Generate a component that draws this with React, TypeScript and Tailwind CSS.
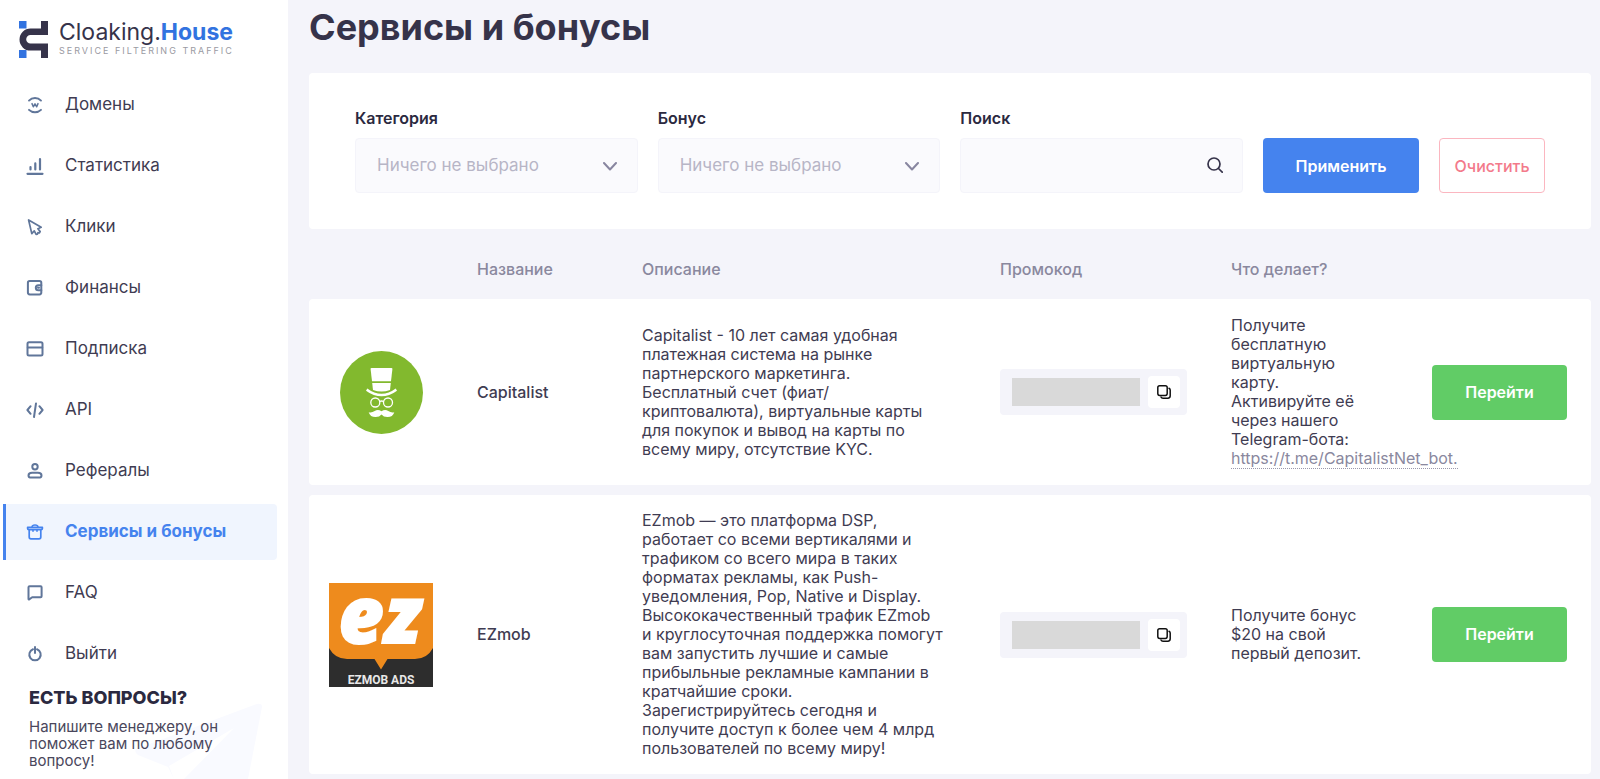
import type { ReactNode } from "react";

const FONT = "font-['Inter','Noto_Sans',sans-serif]";

function Icon({ children }: { children: ReactNode }) {
  return (
    <svg
      aria-hidden="true"
      viewBox="0 0 18 18"
      className="size-[18px] shrink-0"
      fill="none"
      stroke="currentColor"
      strokeWidth="2"
      strokeLinecap="round"
      strokeLinejoin="round"
    >
      {children}
    </svg>
  );
}

const nav: { label: string; icon: ReactNode; active?: boolean }[] = [
  {
    label: "Домены",
    icon: (
      <>
        <path d="M3 4.600Q5.400 2 9 2t6 2.600M3 13.800Q5.400 16.200 9 16.200t6-2.400" strokeWidth="1.900" />
        <path d="M6 7.600l1.300 3.200L9 7.800l1.700 3L12 7.600" strokeWidth="1.500" />
      </>
    ),
  },
  {
    label: "Статистика",
    icon: <path d="M1.500 16.800h15M4.500 12.500V10M9.300 12.500V6.400M14 12.500V2" strokeWidth="2.200" />,
  },
  {
    label: "Клики",
    icon: (
      <path
        d="M2.600 2l3.200 13.600 2.500-2.800 1.800 3.600 1.300-.3.500-1.400 1.400.3.900-1.400-2.300-2.900 3.300-1.400z"
        strokeWidth="1.700"
      />
    ),
  },
  {
    label: "Финансы",
    icon: (
      <>
        <rect x="1.900" y="2" width="13.400" height="13.400" rx="1.800" />
        <path d="M15.300 6.200h-3a2.500 2.500 0 0 0 0 5h3M12 8.700h1" />
      </>
    ),
  },
  {
    label: "Подписка",
    icon: (
      <>
        <rect x="1.500" y="2.300" width="15" height="13.200" rx="1.500" />
        <path d="M1.800 7.400h14.400" />
      </>
    ),
  },
  {
    label: "API",
    icon: <path d="M4.600 5.200L1.400 9l3.200 3.800M13.400 5.200L16.600 9l-3.200 3.800M10 2.400L8 16" />,
  },
  {
    label: "Рефералы",
    icon: (
      <>
        <circle cx="9" cy="4.800" r="2.700" />
        <path d="M6 10.800h6q3.500 0 3.500 2.600 0 2.200-3 2.200h-7q-3 0-3-2.200 0-2.600 3.500-2.600z" />
      </>
    ),
  },
  {
    label: "Сервисы и бонусы",
    active: true,
    icon: (
      <>
        <path d="M1.600 4.400h14.800v1.200q0 1-1.400 1H3q-1.400 0-1.400-1z" strokeWidth="1.700" />
        <path d="M3.200 7v7q0 1.800 1.800 1.800h8q1.800 0 1.800-1.800V7" strokeWidth="1.700" />
        <path d="M6 4Q6.200 2 9 2t3 2M7 6.800v1.400M11 6.800v1.400" strokeWidth="1.600" />
      </>
    ),
  },
  {
    label: "FAQ",
    icon: <path d="M3.600 2.200h11q1 0 1 1v9q0 1-1 1H6.200L3.400 15.300q-.9.400-.9-.6V3.200q0-1 1.100-1z" />,
  },
  {
    label: "Выйти",
    icon: (
      <>
        <path d="M7 4.300a5.700 5.700 0 1 0 4 0" />
        <path d="M9 2v6" />
      </>
    ),
  },
];

function Logo() {
  return (
    <a href="#" className="flex h-[77px] items-start gap-[11px] pl-[19px] pt-[21px]">
      <svg aria-hidden="true" viewBox="0 0 29 37" className="h-[37px] w-[29px] shrink-0">
        <path fill="#3273e0" d="M0 0h7.500v7.500H0zM0 29h7.500v8H0z" />
        <path
          fill="#36334a"
          d="M22 0h7v14H11.500a4.300 4.300 0 0 0 0 8.600H29V37h-7v-7.400H11.500a11 11 0 0 1 0-22H22z"
        />
      </svg>
      <span className="flex flex-col">
        <span className="text-[23px] leading-[23px] text-[#36334a]">
          Cloaking.<b className="font-bold text-[#3273e0]">House</b>
        </span>
        <span className="text-[9px] leading-[13px] tracking-[2px] whitespace-nowrap text-[#9a9aa2]">
          SERVICE FILTERING TRAFFIC
        </span>
      </span>
    </a>
  );
}

function Sidebar() {
  return (
    <aside className="relative flex w-72 shrink-0 flex-col overflow-hidden bg-white">
      <Logo />
      <nav className="flex flex-col gap-[5px] pl-[3px] pr-[11px]">
        {nav.map((item) => (
          <a
            key={item.label}
            href="#"
            className={
              item.active
                ? "flex h-14 items-center gap-[21px] rounded-r border-l-3 border-[#4583ee] bg-[#f0f5fe] pl-5 text-[17px] font-bold text-[#4583ee]"
                : "flex h-14 items-center gap-[21px] border-l-3 border-transparent pl-5 text-[17px] text-[#3f3c52]"
            }
          >
            <span className={item.active ? "text-[#4583ee]" : "text-[#60769a]"}>
              <Icon>{item.icon}</Icon>
            </span>
            {item.label}
          </a>
        ))}
      </nav>
      <section className="relative h-[97px] pl-[29px] pr-12 pt-[5px]">
        <svg
          aria-hidden="true"
          viewBox="0 0 130 78"
          className="absolute bottom-0 left-[135px] h-[78px] w-[130px]"
          fill="#f9faff"
        >
          <path d="M1 48L122 3q5-1 5 3L113 78H49L99 27 34 65 39 78 33 66 3 54q-4-3-2-6z" />
        </svg>
        <h2 className="relative text-[18px] leading-[22px] font-extrabold text-[#2b2940]">ЕСТЬ ВОПРОСЫ?</h2>
        <p className="relative mt-[9px] text-[15px] leading-[17px] text-[#4a475c]">
          Напишите менеджеру, он поможет вам по любому вопросу!
        </p>
      </section>
    </aside>
  );
}

function SelectField({ id, label }: { id: string; label: string }) {
  return (
    <div className="flex min-w-0 flex-1 flex-col gap-2">
      <label htmlFor={id} className="text-base leading-6 font-semibold text-[#2b2940]">
        {label}
      </label>
      <div className="relative">
        <select
          id={id}
          className="h-[55px] w-full appearance-none rounded border border-[#f4f4fa] bg-[#fafafd] pl-[21px] pr-12 text-[17px] text-[#b7b5c6]"
        >
          <option>Ничего не выбрано</option>
        </select>
        <svg
          aria-hidden="true"
          viewBox="0 0 14 9"
          className="pointer-events-none absolute top-6 right-[21px] h-[9px] w-[14px]"
          fill="none"
          stroke="#8886a0"
          strokeWidth="2"
          strokeLinecap="round"
          strokeLinejoin="round"
        >
          <path d="M1 1l6 6.500L13 1" />
        </svg>
      </div>
    </div>
  );
}

function Filters() {
  return (
    <form className="flex items-end gap-5 rounded bg-white px-[46px] pt-[33px] pb-9">
      <SelectField id="category" label="Категория" />
      <SelectField id="bonus" label="Бонус" />
      <div className="flex min-w-0 flex-1 flex-col gap-2">
        <label htmlFor="search" className="text-base leading-6 font-semibold text-[#2b2940]">
          Поиск
        </label>
        <div className="relative">
          <input
            id="search"
            type="text"
            className="h-[55px] w-full rounded border border-[#f4f4fa] bg-[#fafafd] pl-[21px] pr-12 text-[17px] text-[#36334a]"
          />
          <svg
            aria-hidden="true"
            viewBox="0 0 16 16"
            className="pointer-events-none absolute top-[19px] right-5 size-4"
            fill="none"
            stroke="#36334a"
            strokeWidth="1.700"
            strokeLinecap="round"
          >
            <circle cx="7" cy="7" r="6" />
            <path d="M11.500 11.500L15.200 15.200" />
          </svg>
        </div>
      </div>
      <button type="button" className="h-[55px] w-39 rounded bg-[#4583ee] text-base font-semibold text-white">
        Применить
      </button>
      <button
        type="button"
        className="h-[55px] w-[106px] rounded border border-[#fbb6c0] bg-white text-base font-medium text-[#f37a8b]"
      >
        Очистить
      </button>
    </form>
  );
}

function CapitalistLogo() {
  return (
    <svg role="img" aria-label="Capitalist" viewBox="0 0 83 83" className="mx-auto size-[83px]">
      <circle cx="41.500" cy="41.500" r="41.500" fill="#82b92e" />
      <g fill="#fff">
        <path d="M31.500 17h20q1 0 .9 1L51 30.200H32L30.600 18q-.1-1 .9-1z" />
        <path d="M32.200 32h18.600l-.8 7q-8.500 3-17 0z" />
        <path d="M27.300 37.400q14.200 10.800 28.400 0l1.300 2.300Q41.500 51 26 39.700z" />
        <path d="M41.500 60.300q3.500-2.600 6.800-.3 3 2.100 6 1.200-1.500 5-7 4.900-3.800-.1-5.800-2.600-2 2.500-5.800 2.600-5.500.1-7-4.900 3 .9 6-1.200 3.300-2.300 6.800.3z" />
      </g>
      <g fill="none" stroke="#fff" strokeWidth="1.300">
        <circle cx="35.300" cy="51.500" r="4.500" />
        <circle cx="48" cy="51.500" r="4.500" />
        <path d="M39.600 50.500q2-1 4 0" />
      </g>
    </svg>
  );
}

function EzmobLogo() {
  return (
    <svg role="img" aria-label="EZmob" viewBox="0 0 104 104" className="mx-auto size-26 overflow-visible">
      <rect width="104" height="104" fill="#2d2d2d" />
      <path fill="#ee8b1d" d="M0 0h104v65q-6 11-18 11H58.500L52 86.500 45.500 76H18Q6 76 0 65z" />
      <text
        x="51"
        y="60"
        textAnchor="middle"
        fill="#fff"
        stroke="#fff"
        strokeWidth="2"
        fontFamily="Open Sans"
        fontWeight="800"
        fontStyle="italic"
        fontSize="78"
      >
        ez
      </text>
      <text x="52" y="101" textAnchor="middle" fill="#e8e8e8" fontFamily="Roboto" fontWeight="700" fontSize="12">
        EZMOB ADS
      </text>
    </svg>
  );
}

function PromoCode() {
  return (
    <div className="flex h-[46px] w-[187px] items-center gap-2 rounded bg-[#f4f4fa] pl-3 pr-[7px]">
      <span className="h-7 flex-1 bg-[#d9d9d9]" />
      <button type="button" aria-label="Скопировать" className="flex size-8 items-center justify-center rounded bg-white">
        <svg
          aria-hidden="true"
          viewBox="0 0 14 14"
          className="size-[14px]"
          fill="none"
          stroke="#111"
          strokeWidth="1.500"
          strokeLinejoin="round"
          strokeLinecap="round"
        >
          <rect x="0.800" y="0.800" width="9.400" height="9.600" rx="1.800" />
          <path d="M12 3.200q1.200.5 1.200 1.800v5.800q0 2.400-2.400 2.400H6q-1.500 0-2-1.200" />
        </svg>
      </button>
    </div>
  );
}

function Row({ logo, name, description, effect }: { logo: ReactNode; name: string; description: ReactNode; effect: ReactNode }) {
  return (
    <tr className="h-[186px] bg-white">
      <td className="rounded-l pl-5 pr-11">{logo}</td>
      <td className="font-medium">{name}</td>
      <td className="py-4 whitespace-nowrap">{description}</td>
      <td>
        <PromoCode />
      </td>
      <td className="whitespace-nowrap">{effect}</td>
      <td className="rounded-r pr-6">
        <button type="button" className="h-[55px] w-full rounded bg-[#61cc66] font-semibold text-white">
          Перейти
        </button>
      </td>
    </tr>
  );
}

export default function App() {
  return (
    <div className={`${FONT} flex min-h-screen bg-[#f4f4fa] text-[#3f3c52]`}>
      <Sidebar />
      <main className="min-w-0 flex-1 pl-[21px] pr-[9px]">
        <h1 className="pt-[3px] pb-[22px] text-[36px] leading-[48px] font-bold text-[#36334a]">Сервисы и бонусы</h1>
        <Filters />
        <table className="mt-[10px] -mb-[10px] w-full table-fixed border-separate border-spacing-x-0 border-spacing-y-[10px] text-left text-base leading-[19px]">
          <colgroup>
            <col className="w-[168px]" />
            <col className="w-[165px]" />
            <col />
            <col className="w-[231px]" />
            <col className="w-[201px]" />
            <col className="w-[159px]" />
          </colgroup>
          <thead>
            <tr className="h-10 text-[#8a889e]">
              <td />
              <th className="font-medium">Название</th>
              <th className="font-medium">Описание</th>
              <th className="font-medium">Промокод</th>
              <th className="font-medium">Что делает?</th>
              <td />
            </tr>
          </thead>
          <tbody>
            <Row
              logo={<CapitalistLogo />}
              name="Capitalist"
              description={
                <>
                  Capitalist - 10 лет самая удобная
                  <br />
                  платежная система на рынке
                  <br />
                  партнерского маркетинга.
                  <br />
                  Бесплатный счет (фиат/
                  <br />
                  криптовалюта), виртуальные карты
                  <br />
                  для покупок и вывод на карты по
                  <br />
                  всему миру, отсутствие KYC.
                </>
              }
              effect={
                <>
                  Получите
                  <br />
                  бесплатную
                  <br />
                  виртуальную
                  <br />
                  карту.
                  <br />
                  Активируйте её
                  <br />
                  через нашего
                  <br />
                  Telegram-бота:
                  <br />
                  <a href="#" className="border-b border-dotted border-[#9a98ac] text-[#8a889e]">
                    https://t.me/CapitalistNet_bot.
                  </a>
                </>
              }
            />
            <Row
              logo={<EzmobLogo />}
              name="EZmob"
              description={
                <>
                  EZmob — это платформа DSP,
                  <br />
                  работает со всеми вертикалями и
                  <br />
                  трафиком со всего мира в таких
                  <br />
                  форматах рекламы, как Push-
                  <br />
                  уведомления, Pop, Native и Display.
                  <br />
                  Высококачественный трафик EZmob
                  <br />
                  и круглосуточная поддержка помогут
                  <br />
                  вам запустить лучшие и самые
                  <br />
                  прибыльные рекламные кампании в
                  <br />
                  кратчайшие сроки.
                  <br />
                  Зарегистрируйтесь сегодня и
                  <br />
                  получите доступ к более чем 4 млрд
                  <br />
                  пользователей по всему миру!
                </>
              }
              effect={
                <>
                  Получите бонус
                  <br />
                  $20 на свой
                  <br />
                  первый депозит.
                </>
              }
            />
          </tbody>
        </table>
      </main>
    </div>
  );
}
